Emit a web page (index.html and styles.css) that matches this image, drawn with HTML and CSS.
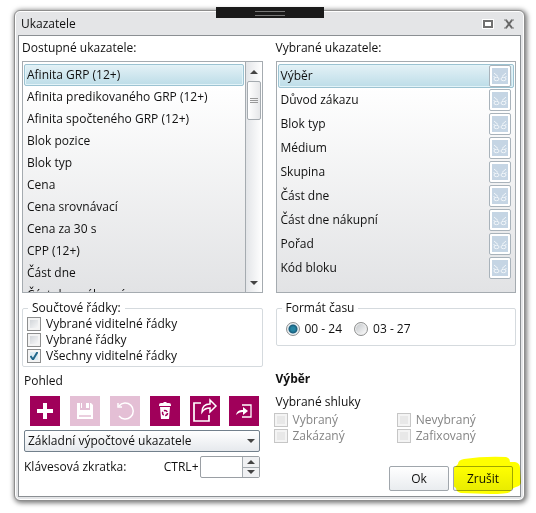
FILE: index.html
```html
<!DOCTYPE html>
<html lang="cs">
<head>
<meta charset="utf-8">
<title>Ukazatele</title>
<link rel="stylesheet" href="styles.css">
</head>
<body>
<svg class="defs" width="0" height="0" aria-hidden="true">
  <symbol id="link" viewBox="0 0 16 16">
    <g fill="none" stroke="#f1f6fa" stroke-width="1">
      <path d="M2 5l4 3.500M14 5l-4 3.500M1.500 8.500l2 1M14.500 8.500l-2 1"/>
      <ellipse cx="4.500" cy="11" rx="2.500" ry="1.700"/>
      <ellipse cx="11.500" cy="11" rx="2.500" ry="1.700"/>
    </g>
  </symbol>
</svg>
<main class="window">
  <div class="grip"></div>
  <header class="titlebar">
    <h1>Ukazatele</h1>
    <button class="winbtn" aria-label="Maximalizovat"><svg width="12" height="10" viewBox="0 0 12 10"><path d="M0 0h12v10H0z" fill="#fff"/><path d="M2 2h8v6H2z" fill="#fff" stroke="#707070" stroke-width="2"/></svg></button>
    <button class="winbtn" aria-label="Zavřít"><svg width="10" height="10" viewBox="0 0 10 10"><path d="M2 1l6 8M8 1L2 9" fill="none" stroke="#666" stroke-width="2"/><path d="M0 1h3M7 1h3M0 9h3M7 9h3" stroke="#777"/></svg></button>
  </header>
  <div class="content">
    <section class="col">
      <h2 class="caption">Dostupné ukazatele:</h2>
      <div class="listbox">
        <ul class="items">
          <li class="selected">Afinita GRP (12+)</li>
          <li>Afinita predikovaného GRP (12+)</li>
          <li>Afinita spočteného GRP (12+)</li>
          <li>Blok pozice</li>
          <li>Blok typ</li>
          <li>Cena</li>
          <li>Cena srovnávací</li>
          <li>Cena za 30 s</li>
          <li>CPP (12+)</li>
          <li>Část dne</li>
          <li>Část dne nákupní</li>
        </ul>
        <div class="scrollbar">
          <button class="scroll-btn" aria-label="Nahoru"><i class="tri up"></i></button>
          <div class="thumb"><i></i><i></i><i></i></div>
          <button class="scroll-btn end" aria-label="Dolů"><i class="tri down"></i></button>
        </div>
      </div>
      <fieldset>
        <legend>Součtové řádky:</legend>
        <label class="check"><input type="checkbox">Vybrané viditelné řádky</label>
        <label class="check"><input type="checkbox">Vybrané řádky</label>
        <label class="check"><input type="checkbox" checked>Všechny viditelné řádky</label>
      </fieldset>
      <div class="view">
        <h2 class="view-title">Pohled</h2>
        <div class="tools">
          <button class="tool" aria-label="Přidat"><svg viewBox="0 0 30 30"><path d="M15 7v16M7 15h16" stroke="#fff" stroke-width="4"/></svg></button>
          <button class="tool" aria-label="Uložit" disabled><svg viewBox="0 0 30 30"><path fill="#fff" d="M7 7h3v7h10V7h1l2 2v14H7z"/><path fill="#fff" d="M16 7h3v5h-3zM11 7h1v5h-1z"/><path d="M9 20h12" stroke="#e4bfd5" stroke-width="1.500"/></svg></button>
          <button class="tool" aria-label="Zpět" disabled><svg viewBox="0 0 30 30"><path d="M9 10a8 8 0 1 1 0 10" fill="none" stroke="#fff" stroke-width="1.500"/><path d="M8 7v4h4" fill="none" stroke="#fff" stroke-width="1.500"/></svg></button>
          <button class="tool" aria-label="Smazat"><svg viewBox="0 0 30 30"><path fill="#fff" d="M9 9q0-2 2-2h2l1-1h2l1 1h2q2 0 2 2v1H9zM10 11h10l-1 12h-8z"/><circle cx="15" cy="17" r="2.500" fill="none" stroke="#a0005a" stroke-width="1.500" stroke-dasharray="3.700 1.500"/></svg></button>
          <button class="tool" aria-label="Sdílet"><svg viewBox="0 0 30 30" fill="none" stroke="#fff"><path d="M11 7H4v18h15v-6" stroke-width="1.700"/><path d="M12 16c0-6 3-8 8-8V4l6 6-6 6v-4c-4 0-6 1-8 4z" stroke-width="1.500"/></svg></button>
          <button class="tool" aria-label="Importovat"><svg viewBox="0 0 30 30"><path d="M13 9h9v12h-9" fill="none" stroke="#fff" stroke-width="1.300"/><path d="M7 19c1-4 3-5 7-5v-3l5 4-5 4v-3c-3 0-5 1-7 3z" fill="#fff"/></svg></button>
        </div>
        <div class="combo">
          <select aria-label="Pohled"><option>Základní výpočtové ukazatele</option></select>
          <i class="tri down"></i>
        </div>
        <div class="shortcut">
          <label for="key">Klávesová zkratka:</label>
          <span class="ctrl">CTRL+</span>
          <div class="spinner">
            <input id="key" type="text">
            <div class="steps">
              <button aria-label="Více"><i class="tri up"></i></button>
              <button aria-label="Méně"><i class="tri down"></i></button>
            </div>
          </div>
        </div>
      </div>
    </section>
    <section class="col">
      <h2 class="caption">Vybrané ukazatele:</h2>
      <div class="listbox">
        <ul class="items tall">
          <li class="selected">Výběr<button class="link" aria-label="Shluky"><svg><use href="#link"/></svg></button></li>
          <li>Důvod zákazu<button class="link" aria-label="Shluky"><svg><use href="#link"/></svg></button></li>
          <li>Blok typ<button class="link" aria-label="Shluky"><svg><use href="#link"/></svg></button></li>
          <li>Médium<button class="link" aria-label="Shluky"><svg><use href="#link"/></svg></button></li>
          <li>Skupina<button class="link" aria-label="Shluky"><svg><use href="#link"/></svg></button></li>
          <li>Část dne<button class="link" aria-label="Shluky"><svg><use href="#link"/></svg></button></li>
          <li>Část dne nákupní<button class="link" aria-label="Shluky"><svg><use href="#link"/></svg></button></li>
          <li>Pořad<button class="link" aria-label="Shluky"><svg><use href="#link"/></svg></button></li>
          <li>Kód bloku<button class="link" aria-label="Shluky"><svg><use href="#link"/></svg></button></li>
        </ul>
      </div>
      <fieldset class="time">
        <legend>Formát času</legend>
        <label class="radio"><input type="radio" name="time" checked>00 - 24</label>
        <label class="radio"><input type="radio" name="time">03 - 27</label>
      </fieldset>
      <h2 class="detail-title">Výběr</h2>
      <h3 class="clusters-title">Vybrané shluky</h3>
      <div class="clusters">
        <label class="check"><input type="checkbox" disabled>Vybraný</label>
        <label class="check"><input type="checkbox" disabled>Nevybraný</label>
        <label class="check"><input type="checkbox" disabled>Zakázaný</label>
        <label class="check"><input type="checkbox" disabled>Zafixovaný</label>
      </div>
      <div class="actions">
        <button class="btn">Ok</button>
        <div class="marked">
          <button class="btn">Zrušit</button>
          <svg class="marker" width="68" height="40" viewBox="0 0 68 40"><path fill="#ff0" d="M4 8q0-4 6-5Q30 0 52 1q4 1 4 5h5q5 1 5 6l1 14q0 4-5 5-4 1-6 5-3 2-20 2l-29-1q-5-1-5-5-4-2-3-7 1-5-1-9-1-4 3-5z"/></svg>
        </div>
      </div>
    </section>
  </div>
</main>
</body>
</html>
```
FILE: styles.css
```css
* { box-sizing: border-box; }
body {
  margin: 0;
  padding: 10px 11px 12px 14px;
  background: #fff;
  color: #111;
  font: 12px/16px "Open Sans", "Noto Sans", sans-serif;
}
h1, h2, h3, ul { margin: 0; padding: 0; font-size: inherit; font-weight: 400; }
button, input, select { font: inherit; color: inherit; margin: 0; padding: 0; }
.defs { display: block; position: absolute; }

.window {
  position: relative;
  padding: 1px 3px 3px;
  border: 1px solid #8e8e8e;
  border-radius: 6px;
  background: #e4e5e7;
  box-shadow: 1px 1px 5px 1px #777, inset 0 0 0 1px #fff;
}
.grip {
  position: absolute;
  top: -4px;
  left: 50%;
  width: 108px;
  height: 11px;
  margin-left: -54px;
  background: #1a1a1a;
}
.grip::after {
  content: "";
  display: block;
  width: 30px;
  height: 3px;
  margin: 4px auto;
  border: solid #777;
  border-width: 1px 0;
}
.titlebar { display: flex; align-items: center; gap: 10px; height: 23px; padding: 0 7px 0 3px; }
.titlebar h1 { flex: 1; }
.winbtn { display: flex; border: 0; background: none; }

.content {
  display: grid;
  grid-template-columns: 1fr 1fr;
  gap: 13px;
  padding: 4px 4px 5px 3px;
  border: 1px solid #8b8f93;
  background: #fff;
}
.col { display: flex; flex-direction: column; min-width: 0; }
.caption { height: 21px; }

.listbox {
  display: flex;
  height: 232px;
  border: 1px solid #a5abb0;
  background: linear-gradient(#fff 10%, #e2e3e5);
}
.items { flex: 1; list-style: none; padding: 2px 1px 0; overflow: hidden; }
.items li {
  display: flex;
  align-items: center;
  justify-content: space-between;
  height: 22px;
  padding: 0 2px;
  border: 1px solid transparent;
  border-radius: 2px;
}
.items.tall li { height: 24px; }
.items .selected {
  border-color: #9cc3d2;
  background: linear-gradient(#e3f1f6, #bddde8);
  box-shadow: inset 0 0 0 1px #e2f3f8;
}
.link {
  flex: none;
  width: 22px;
  height: 22px;
  padding: 2px;
  border: 1px solid #a9b3bb;
  border-radius: 2px;
  background: #fff;
}
.link svg { display: block; width: 16px; height: 16px; background: #c5d5e4; }

.scrollbar {
  display: flex;
  flex-direction: column;
  width: 17px;
  border-left: 1px solid #a5abb0;
  background: linear-gradient(90deg, #e3e5e8, #fff);
}
.scroll-btn { display: flex; align-items: center; justify-content: center; height: 19px; border: 0; background: none; }
.scroll-btn.end { margin-top: auto; }
.thumb {
  display: flex;
  flex-direction: column;
  align-items: center;
  justify-content: center;
  gap: 1px;
  width: 14px;
  height: 39px;
  margin-left: 1px;
  border: 1px solid #a5abb0;
  border-radius: 2px;
  background: linear-gradient(90deg, #fff, #e6e7e9);
}
.thumb i { width: 8px; height: 1px; background: #999; }
.tri { border: solid transparent; border-width: 0 4px; }
.tri.up { border-bottom: 4px solid #444; }
.tri.down { border-top: 4px solid #444; }

fieldset {
  min-width: 0;
  height: 67px;
  margin: 7px 0 0;
  padding: 0 4px;
  border: 1px solid #d5dade;
  border-radius: 2px;
}
legend { height: 16px; margin-left: 1px; padding: 0 4px; }
.time { display: flex; gap: 12px; height: 46px; padding: 5px 9px 0; }
.time legend { margin-left: -4px; }
.check, .radio { display: flex; align-items: center; gap: 5px; height: 16px; }
.check input {
  appearance: none;
  width: 14px;
  height: 14px;
  border: 1px solid #8e8f8f;
  background: linear-gradient(135deg, #c9cdd2, #fff);
  box-shadow: inset 0 0 0 2px #f4f4f4;
}
.check input:checked {
  background: url("data:image/svg+xml,%3Csvg xmlns='http://www.w3.org/2000/svg' viewBox='0 0 12 12'%3E%3Cpath d='M2.500 6l2.500 3.500L9.500 2' fill='none' stroke='%2320668a' stroke-width='2'/%3E%3C/svg%3E") #dcebf3;
}
.radio input {
  appearance: none;
  width: 14px;
  height: 14px;
  border: 1px solid #8e8f8f;
  border-radius: 50%;
  background: linear-gradient(135deg, #bfc3c6, #fff);
  box-shadow: inset 0 0 0 1px #f0f0f0;
}
.radio input:checked { background: radial-gradient(circle, #2585a3 0 2px, #1b5c7b 4px, #cfe3ec 5px); }

.view { padding: 6px 3px 0 2px; }
.view-title { height: 23px; }
.tools { display: flex; justify-content: space-between; padding-left: 6px; }
.tool { width: 30px; height: 30px; border: 0; background: #a0005a; }
.tool:disabled { background: #e4bfd5; }
.tool svg { display: block; }
.combo { display: grid; align-items: center; margin-top: 4px; }
.combo select {
  grid-area: 1 / 1;
  appearance: none;
  width: 100%;
  height: 22px;
  padding: 0 3px;
  border: 1px solid #72808c;
  border-radius: 2px;
  background: linear-gradient(#fff, #e6e9ed);
}
.combo .tri { grid-area: 1 / 1; justify-self: end; margin-right: 5px; pointer-events: none; }
.shortcut { display: flex; align-items: center; margin-top: 4px; }
.ctrl { margin-left: auto; padding-right: 1px; }
.spinner { display: flex; width: 60px; height: 22px; border: 1px solid #9a9fa4; border-radius: 2px; }
.spinner input { flex: 1; min-width: 0; border: 0; background: none; }
.steps { display: flex; flex-direction: column; width: 17px; border-left: 1px solid #a5abb0; }
.steps button { flex: 1; display: flex; align-items: center; justify-content: center; border: 0; background: #f0f1f3; }
.steps button + button { border-top: 1px solid #a5abb0; }

.detail-title { margin-top: 25px; font-weight: 700; }
.clusters-title { margin: 7px 0 2px; }
.clusters { display: grid; grid-template-columns: 1fr 1fr; column-gap: 4px; margin-left: -2px; color: #858585; }
.clusters input { border-color: #c6c6c6; background: #e8e8e8; }
.actions { display: flex; justify-content: flex-end; gap: 4px; margin-top: 22px; padding-right: 3px; }
.btn {
  display: block;
  width: 60px;
  height: 25px;
  border: 1px solid #a0a6ac;
  border-radius: 2px;
  background: linear-gradient(#fff, #e9ecef);
}
.marked { position: relative; }
.marker { position: absolute; left: 1px; top: -10px; mix-blend-mode: multiply; pointer-events: none; }
```
